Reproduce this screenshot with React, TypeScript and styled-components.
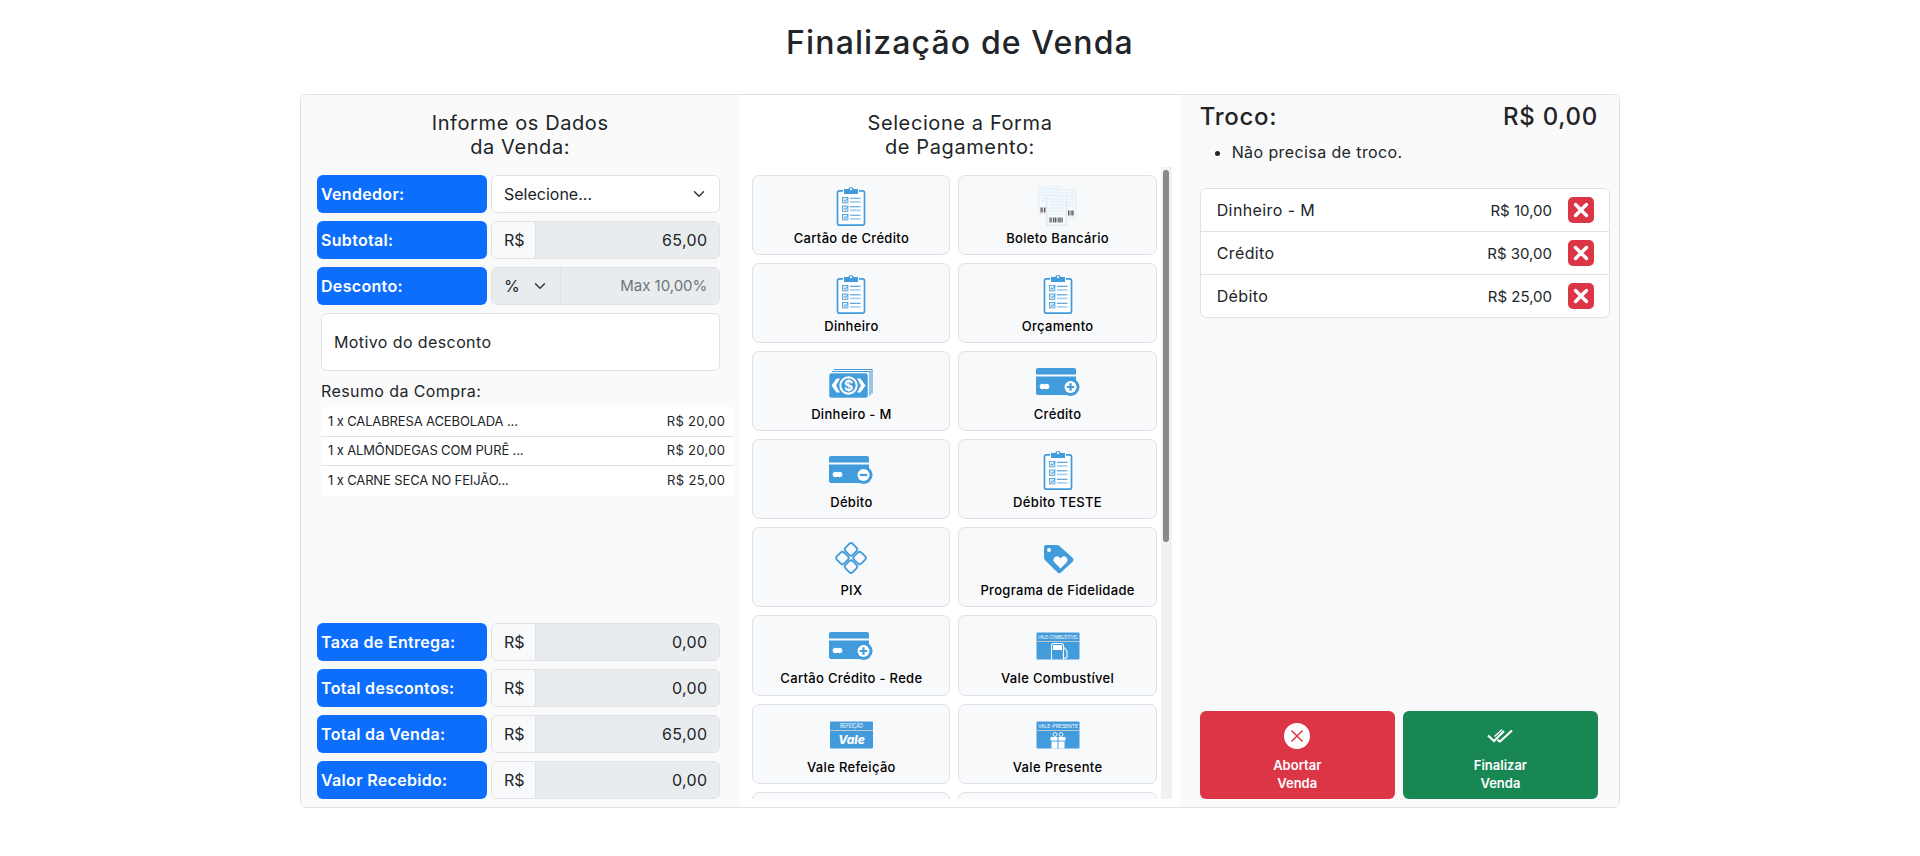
import React from "react";
import styled, { createGlobalStyle } from "styled-components";

const BLUE = "#429bdb";
const LIGHT = "#a3cff0";
const FONT = `Inter, "Noto Sans", "Liberation Sans", sans-serif`;

const GlobalStyle = createGlobalStyle`
  * { box-sizing: border-box; }
  html, body { margin: 0; height: 100%; background: #fff; overflow: hidden; }
  body { font-family: ${FONT}; color: #212529; font-size: 16px; }
`;

const Page = styled.div`
  width: 1320px;
  margin: 0 auto;
`;

const Title = styled.h1`
  margin: 0 0 31px;
  padding-top: 23px;
  font-size: 32px;
  line-height: 40px;
  font-weight: 500;
  text-align: center;
  letter-spacing: 0.035em;
`;

const Board = styled.div`
  display: grid;
  grid-template-columns: repeat(3, minmax(0, 1fr));
  height: calc(100vh - 142px);
  border: 1px solid #dee2e6;
  border-radius: 6px;
  overflow: hidden;
`;

const Column = styled.section<{ $white?: boolean }>`
  min-width: 0;
  min-height: 0;
  display: flex;
  flex-direction: column;
  background: ${(p) => (p.$white ? "#fff" : "#fafafa")};
`;

const LeftColumn = styled(Column)`
  padding: 16px 20px 8px 16px;
`;

const MiddleColumn = styled(Column)`
  padding: 16px 8px 8px 0;
`;

const RightColumn = styled(Column)`
  padding: 8px 21px 8px 20px;
`;

const Heading = styled.h2`
  margin: 0 0 16px;
  padding-left: 3px;
  font-size: 20px;
  line-height: 24px;
  font-weight: 400;
  text-align: center;
  letter-spacing: 0.03em;
`;

const MiddleHeading = styled(Heading)`
  margin-bottom: 8px;
  padding-left: 8px;
`;

const FieldRow = styled.div`
  display: grid;
  grid-template-columns: 170px 1fr;
  gap: 4px;
  height: 38px;
  margin-bottom: 8px;
`;

const FieldLabel = styled.div`
  display: flex;
  align-items: center;
  padding: 0 0 1px 4px;
  background: #0d6efd;
  border-radius: 6px;
  color: #fff;
  font-weight: 600;
  font-size: 16px;
  letter-spacing: 0.02em;
`;

const InputGroup = styled.div`
  display: flex;
  border: 1px solid #dee2e6;
  border-radius: 6px;
  overflow: hidden;
`;

const Prefix = styled.div`
  display: flex;
  align-items: center;
  width: 44px;
  padding: 0 0 1px 12px;
  background: #f8f9fa;
  border-right: 1px solid #dee2e6;
  font-size: 16px;
`;

const PercentSelect = styled.div`
  display: flex;
  align-items: center;
  justify-content: space-between;
  width: 69px;
  padding: 0 14px 1px 12px;
  background: #e9ecef;
  border-right: 1px solid #dee2e6;
`;

const ValueBox = styled.div<{ $muted?: boolean }>`
  flex: 1;
  display: flex;
  align-items: center;
  justify-content: flex-end;
  padding: 0 12px 1px 0;
  background: #e9ecef;
  color: ${(p) => (p.$muted ? "#6c757d" : "#212529")};
  font-size: ${(p) => (p.$muted ? "15px" : "16px")};
  letter-spacing: ${(p) => (p.$muted ? "0" : "0.02em")};
`;

const SelectBox = styled.div`
  display: flex;
  align-items: center;
  justify-content: space-between;
  padding: 0 14px 1px 12px;
  background: #fff;
  border: 1px solid #dee2e6;
  border-radius: 6px;
`;

const ReasonBox = styled.div`
  display: flex;
  align-items: center;
  height: 58px;
  margin: 0 0 8px 4px;
  padding: 0 12px 1px;
  background: #fff;
  border: 1px solid #dee2e6;
  border-radius: 6px;
  letter-spacing: 0.025em;
`;

const SummaryTitle = styled.div`
  margin: 0 0 4px 4px;
  line-height: 24px;
  letter-spacing: 0.025em;
`;

const SummaryList = styled.div`
  margin: 0 -13px 0 4px;
  background: #fff;
`;

const SummaryRow = styled.div`
  display: flex;
  justify-content: space-between;
  align-items: center;
  height: 29.5px;
  padding: 0 8px 1px 7px;
  font-size: 13px;
  letter-spacing: 0.025em;
  border-bottom: 1px solid #dee2e6;

  &:last-child {
    border-bottom: 0;
  }
`;

const SummaryName = styled.span`
  letter-spacing: -0.01em;
`;

const BottomFields = styled.div`
  margin-top: auto;

  ${FieldRow}:last-child {
    margin-bottom: 0;
  }
`;

const MethodArea = styled.div`
  flex: 1;
  min-height: 0;
  display: flex;
`;

const MethodList = styled.div`
  flex: 1;
  min-width: 0;
  padding: 8px 4px 0 12px;
  overflow: hidden;
`;

const ScrollTrack = styled.div`
  flex: none;
  width: 11px;
  padding: 2.5px;
  background: #f1f1f1;
`;

const ScrollThumb = styled.div`
  height: 372px;
  background: #888;
  border-radius: 3px;
`;

const MethodGrid = styled.div`
  display: grid;
  grid-template-columns: 1fr 1fr;
  grid-auto-rows: 80.1px;
  gap: 8px;
`;

const MethodCard = styled.button`
  display: flex;
  flex-direction: column;
  align-items: center;
  padding: 10px 0 0;
  background: #f8f9fa;
  border: 1px solid #dee2e6;
  border-radius: 7px;
  font-family: ${FONT};
  color: #000;

  svg {
    display: block;
    flex: none;
  }
`;

const MethodName = styled.span`
  margin-top: 3px;
  font-size: 13px;
  line-height: 18px;
  font-weight: 500;
  letter-spacing: 0.025em;
`;

const ChangeHeader = styled.div`
  display: flex;
  justify-content: space-between;
  margin-top: -1px;
  font-size: 24px;
  line-height: 29px;
  font-weight: 500;
  letter-spacing: 0.03em;
`;

const ChangeNotes = styled.ul`
  margin: 9px 0 24px;
  padding-left: 32px;
  line-height: 24px;
  letter-spacing: 0.025em;
`;

const PaymentList = styled.div`
  margin-right: -12px;
  background: #fff;
  border: 1px solid #dee2e6;
  border-radius: 6px;
`;

const PaymentRow = styled.div`
  display: flex;
  align-items: center;
  height: 43px;
  padding: 0 15px 0 16px;
  border-bottom: 1px solid #dee2e6;
  letter-spacing: 0.025em;

  &:last-child {
    height: 42px;
    border-bottom: 0;
  }
`;

const PaymentName = styled.span`
  flex: 1;
`;

const PaymentValue = styled.span`
  font-size: 15px;
  letter-spacing: 0;
`;

const RemoveButton = styled.button`
  display: flex;
  align-items: center;
  justify-content: center;
  width: 26px;
  height: 26px;
  margin-left: 16px;
  padding: 0;
  background: #dc3545;
  border: 0;
  border-radius: 5px;
`;

const Actions = styled.div`
  display: flex;
  gap: 8px;
  margin-top: auto;
`;

const ActionButton = styled.button<{ $tone: string }>`
  flex: 1;
  height: 88px;
  display: flex;
  flex-direction: column;
  align-items: center;
  padding: 12px 0 0;
  background: ${(p) => p.$tone};
  border: 0;
  border-radius: 6px;
  color: #fff;
  font-family: ${FONT};
  font-size: 13px;
  line-height: 18px;
  font-weight: 600;

  svg {
    display: block;
    margin-bottom: 7px;
    flex: none;
  }
`;

const Chevron = () => (
  <svg width="12" height="12" viewBox="0 0 16 16" fill="none" stroke="#343a40" strokeWidth="2" strokeLinecap="round" strokeLinejoin="round">
    <path d="M2 5l6 6 6-6" />
  </svg>
);

const ChecklistRow = ({ y }: { y: number }) => (
  <g>
    <rect x="13.5" y={y} width="5.4" height="5.4" fill="#d6eaf8" stroke={BLUE} strokeWidth="0.8" />
    <path d={`M15 ${y + 2.5}l1.2 1.4 3-3.6`} fill="none" stroke={BLUE} strokeWidth="1" />
    <path d={`M21 ${y + 0.8}h10.5`} stroke={BLUE} strokeWidth="1.1" />
    <path d={`M21 ${y + 4.4}h10.5`} stroke={LIGHT} strokeWidth="1.6" />
  </g>
);

const ClipboardIcon = () => (
  <svg width="44" height="40" viewBox="0 0 44 40">
    <path d="M14 4.8H10.5a2 2 0 0 0-2 2v30.4a2 2 0 0 0 2 2h23a2 2 0 0 0 2-2V6.8a2 2 0 0 0-2-2H30" fill="#fff" stroke={BLUE} strokeWidth="1.7" />
    <path d="M15 3h4.3a2.8 2.8 0 0 1 5.4 0H29v5H15z" fill={BLUE} />
    <circle cx="22" cy="3.2" r="1.1" fill="#fff" />
    <ChecklistRow y={11.5} />
    <ChecklistRow y={20} />
    <ChecklistRow y={28.5} />
  </svg>
);

const BillSheet = ({ x, y, w, h }: { x: number; y: number; w: number; h: number }) => (
  <g>
    <rect x={x} y={y} width={w} height={h} fill="#f4f9fd" stroke="#e3e8ec" strokeWidth="0.8" />
    {[3, 6, 9, 12, 15].map((d) => (
      <path key={d} d={`M${x + 2} ${y + d}h${w - 4}`} stroke="#d8ebf8" strokeWidth="0.9" />
    ))}
  </g>
);

const Barcode = ({ x, y, w }: { x: number; y: number; w: number }) => (
  <path d={`M${x} ${y}h${w}`} stroke="#555" strokeWidth="5" strokeDasharray="1.2 .6 .7 .9 1.4 .6" />
);

const BoletoIcon = () => (
  <svg width="44" height="40" viewBox="0 0 44 40">
    <BillSheet x={3} y={0} w={21} h={28} />
    <Barcode x={4.5} y={24} w={6} />
    <BillSheet x={20} y={4} w={20} h={28} />
    <Barcode x={32} y={27} w={6} />
    <rect x="10" y="10" width="21" height="31" fill="#e6e9ec" />
    <BillSheet x={11} y={10} w={19} h={29} />
    <rect x="13" y="30" width="15" height="8" fill="#f8fafc" />
    <Barcode x={13.5} y={34} w={14} />
  </svg>
);

const MoneyIcon = () => (
  <svg width="44" height="40" viewBox="0 0 44 40">
    <path d="M5 7.5h38v24M3 9.5h38v24" fill="none" stroke={BLUE} strokeWidth="1.1" />
    <rect x="0" y="11" width="39" height="25" rx="2.5" fill={BLUE} stroke="#f8f9fa" strokeWidth="0.6" />
    <path d="M2.5 23.5 7.5 16.5H11l-4 7 4 7H7.5zM36.5 23.5 31.5 16.5H28l4 7-4 7h3.5z" fill="#fff" />
    <circle cx="19.5" cy="23.5" r="8.2" fill={BLUE} stroke="#fff" strokeWidth="2" />
    <text x="19.5" y="28.5" textAnchor="middle" fontSize="14" fontWeight="700" fontFamily={FONT} fill="#fff">$</text>
  </svg>
);

const BankCardIcon = ({ minus }: { minus?: boolean }) => (
  <svg width="44" height="40" viewBox="0 0 44 40">
    <path d="M2 6h36a2 2 0 0 1 2 2v4.5H0V8a2 2 0 0 1 2-2z" fill={BLUE} />
    <path d="M0 14.5h40V31a2 2 0 0 1-2 2H2a2 2 0 0 1-2-2z" fill={BLUE} />
    <circle cx="34.5" cy="25" r="9" fill={BLUE} />
    <circle cx="34.5" cy="25" r="6" fill="#fff" />
    <path d={minus ? "M30.8 25h7.4" : "M30.8 25h7.4M34.5 21.3v7.4"} stroke={BLUE} strokeWidth="2.2" />
    <circle cx="6.5" cy="24.5" r="2.8" fill="#fff" />
    <circle cx="10.5" cy="24.5" r="2.8" fill="#fff" />
  </svg>
);

const PixIcon = () => (
  <svg width="44" height="40" viewBox="0 0 44 40">
    <g fill="none" stroke={BLUE} strokeWidth="1.8">
      <rect x="16.9" y="6.3" width="10.2" height="10.2" rx="2.5" transform="rotate(45 22 11.4)" />
      <rect x="16.9" y="23.5" width="10.2" height="10.2" rx="2.5" transform="rotate(45 22 28.6)" />
      <rect x="8.3" y="14.9" width="10.2" height="10.2" rx="2.5" transform="rotate(45 13.4 20)" />
      <rect x="25.5" y="14.9" width="10.2" height="10.2" rx="2.5" transform="rotate(45 30.6 20)" />
    </g>
  </svg>
);

const TagIcon = () => (
  <svg width="44" height="40" viewBox="0 0 44 40">
    <path d="M10 7h10.5q2 0 3.5 1.4l12.5 11.4q2 2 0 4L25.3 34.3q-2 2-4 0L9.4 22.6Q8 21.2 8 19V9q0-2 2-2z" fill={BLUE} />
    <circle cx="13" cy="12" r="1.9" fill="#fff" />
    <path d="M24.5 30.5 18.6 24.6a3.5 3.5 0 0 1 5-5l.9.9.9-.9a3.5 3.5 0 0 1 5 5z" fill="#fff" />
  </svg>
);

const VoucherFrame = ({ label, children }: { label: string; children: React.ReactNode }) => (
  <svg width="44" height="40" viewBox="0 0 44 40">
    <rect x="0.5" y="6.5" width="43" height="27" rx="1" fill={BLUE} />
    <path d="M0.5 15.5h43" stroke="#d9d3c3" strokeWidth="0.8" />
    <text x="22" y="13" textAnchor="middle" fontSize="5.2" fontFamily={FONT} fill="#fff" textLength="40" lengthAdjust="spacingAndGlyphs">{label}</text>
    {children}
  </svg>
);

const FuelIcon = () => (
  <VoucherFrame label="VALE-COMBUSTÍVEL">
    <path d="M15.5 33.5V19.5a2 2 0 0 1 2-2h8a2 2 0 0 1 2 2v14" fill="none" stroke="#fff" strokeWidth="1.1" />
    <rect x="17" y="19" width="9" height="5" fill="#fff" />
    <path d="M27.5 21l3.5 4v5.5a1.8 1.8 0 0 1-3.6 0V27" fill="none" stroke="#fff" strokeWidth="1.1" />
  </VoucherFrame>
);

const MealIcon = () => (
  <svg width="44" height="40" viewBox="0 0 44 40">
    <rect x="1" y="6.5" width="43" height="27" rx="1" fill={BLUE} />
    <path d="M1 15.5h43" stroke="#d9d3c3" strokeWidth="0.8" />
    <text x="22.5" y="13" textAnchor="middle" fontSize="5.5" fontFamily={FONT} fill="#fff" textLength="23" lengthAdjust="spacingAndGlyphs">REFEIÇÃO</text>
    <text x="22.5" y="29" textAnchor="middle" fontSize="12" fontWeight="800" fontStyle="italic" fontFamily={FONT} fill="#fff">Vale</text>
  </svg>
);

const GiftIcon = () => (
  <VoucherFrame label="VALE-PRESENTE">
    <rect x="14.5" y="22" width="15" height="3.6" fill="#fff" />
    <path d="M15.5 26.5h13v7h-13z" fill="#fff" />
    <path d="M22 22v11.5" stroke={BLUE} strokeWidth="1" />
    <circle cx="19" cy="19.5" r="1.9" fill="none" stroke="#fff" strokeWidth="0.9" />
    <circle cx="25" cy="19.5" r="1.9" fill="none" stroke="#fff" strokeWidth="0.9" />
  </VoucherFrame>
);

const AbortIcon = () => (
  <svg width="26" height="26" viewBox="0 0 26 26">
    <circle cx="13" cy="13" r="13" fill="#fff" />
    <path d="M7.5 7.5l11 11M18.5 7.5l-11 11" stroke="#dc3545" strokeWidth="1.5" />
  </svg>
);

const DoubleCheckIcon = () => (
  <svg width="26" height="26" viewBox="0 0 26 26" fill="none" stroke="#fff" strokeWidth="2.2">
    <path d="M1 12.5 7 18 17 8" />
    <path d="M10.5 17 13 18.5 25 7.5" />
    <path d="M7.5 13.5 15 6.5" strokeWidth="1.4" />
  </svg>
);

const RemoveIcon = () => (
  <svg width="16" height="16" viewBox="0 0 16 16" stroke="#fff" strokeWidth="3.4" strokeLinecap="round">
    <path d="M2.5 2.5l11 11M13.5 2.5l-11 11" />
  </svg>
);

const topFields = [{ label: "Subtotal:", value: "65,00" }];
const bottomFields = [
  { label: "Taxa de Entrega:", value: "0,00" },
  { label: "Total descontos:", value: "0,00" },
  { label: "Total da Venda:", value: "65,00" },
  { label: "Valor Recebido:", value: "0,00" },
];

const summary = [
  { name: "1 x CALABRESA ACEBOLADA ...", price: "R$ 20,00" },
  { name: "1 x ALMÔNDEGAS COM PURÊ ...", price: "R$ 20,00" },
  { name: "1 x CARNE SECA NO FEIJÃO...", price: "R$ 25,00" },
];

const methods = [
  { name: "Cartão de Crédito", icon: <ClipboardIcon /> },
  { name: "Boleto Bancário", icon: <BoletoIcon /> },
  { name: "Dinheiro", icon: <ClipboardIcon /> },
  { name: "Orçamento", icon: <ClipboardIcon /> },
  { name: "Dinheiro - M", icon: <MoneyIcon /> },
  { name: "Crédito", icon: <BankCardIcon /> },
  { name: "Débito", icon: <BankCardIcon minus /> },
  { name: "Débito TESTE", icon: <ClipboardIcon /> },
  { name: "PIX", icon: <PixIcon /> },
  { name: "Programa de Fidelidade", icon: <TagIcon /> },
  { name: "Cartão Crédito - Rede", icon: <BankCardIcon /> },
  { name: "Vale Combustível", icon: <FuelIcon /> },
  { name: "Vale Refeição", icon: <MealIcon /> },
  { name: "Vale Presente", icon: <GiftIcon /> },
];

const payments = [
  { name: "Dinheiro - M", value: "R$ 10,00" },
  { name: "Crédito", value: "R$ 30,00" },
  { name: "Débito", value: "R$ 25,00" },
];

const MoneyField = ({ label, value }: { label: string; value: string }) => (
  <FieldRow>
    <FieldLabel>{label}</FieldLabel>
    <InputGroup>
      <Prefix>R$</Prefix>
      <ValueBox>{value}</ValueBox>
    </InputGroup>
  </FieldRow>
);

function App() {
  return (
    <Page>
      <GlobalStyle />
      <Title>Finalização de Venda</Title>
      <Board>
        <LeftColumn>
          <Heading>
            Informe os Dados
            <br />
            da Venda:
          </Heading>
          <FieldRow>
            <FieldLabel>Vendedor:</FieldLabel>
            <SelectBox>
              Selecione...
              <Chevron />
            </SelectBox>
          </FieldRow>
          {topFields.map((f) => (
            <MoneyField key={f.label} label={f.label} value={f.value} />
          ))}
          <FieldRow>
            <FieldLabel>Desconto:</FieldLabel>
            <InputGroup>
              <PercentSelect>
                %
                <Chevron />
              </PercentSelect>
              <ValueBox $muted>Max 10,00%</ValueBox>
            </InputGroup>
          </FieldRow>
          <ReasonBox>Motivo do desconto</ReasonBox>
          <SummaryTitle>Resumo da Compra:</SummaryTitle>
          <SummaryList>
            {summary.map((item) => (
              <SummaryRow key={item.name}>
                <SummaryName>{item.name}</SummaryName>
                <span>{item.price}</span>
              </SummaryRow>
            ))}
          </SummaryList>
          <BottomFields>
            {bottomFields.map((f) => (
              <MoneyField key={f.label} label={f.label} value={f.value} />
            ))}
          </BottomFields>
        </LeftColumn>

        <MiddleColumn $white>
          <MiddleHeading>
            Selecione a Forma
            <br />
            de Pagamento:
          </MiddleHeading>
          <MethodArea>
            <MethodList>
              <MethodGrid>
                {methods.map((m) => (
                  <MethodCard key={m.name}>
                    {m.icon}
                    <MethodName>{m.name}</MethodName>
                  </MethodCard>
                ))}
                <MethodCard />
                <MethodCard />
              </MethodGrid>
            </MethodList>
            <ScrollTrack>
              <ScrollThumb />
            </ScrollTrack>
          </MethodArea>
        </MiddleColumn>

        <RightColumn>
          <ChangeHeader>
            <span>Troco:</span>
            <span>R$ 0,00</span>
          </ChangeHeader>
          <ChangeNotes>
            <li>Não precisa de troco.</li>
          </ChangeNotes>
          <PaymentList>
            {payments.map((p) => (
              <PaymentRow key={p.name}>
                <PaymentName>{p.name}</PaymentName>
                <PaymentValue>{p.value}</PaymentValue>
                <RemoveButton>
                  <RemoveIcon />
                </RemoveButton>
              </PaymentRow>
            ))}
          </PaymentList>
          <Actions>
            <ActionButton $tone="#dc3545">
              <AbortIcon />
              Abortar
              <br />
              Venda
            </ActionButton>
            <ActionButton $tone="#198754">
              <DoubleCheckIcon />
              Finalizar
              <br />
              Venda
            </ActionButton>
          </Actions>
        </RightColumn>
      </Board>
    </Page>
  );
}

export default App;
